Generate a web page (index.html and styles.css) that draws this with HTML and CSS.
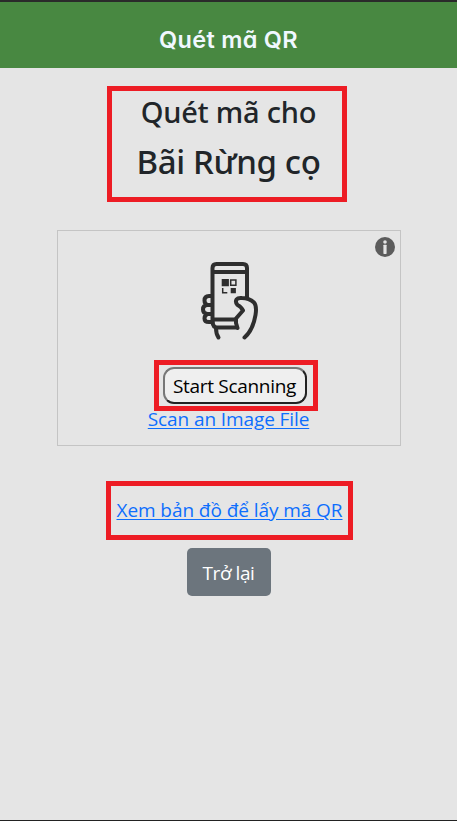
FILE: index.html
```html
<!DOCTYPE html>
<html lang="vi">
<head>
<meta charset="utf-8">
<title>Quét mã QR</title>
<link rel="stylesheet" href="styles.css">
</head>
<body>
<header class="topbar"><h1>Quét mã QR</h1></header>
<main>
  <section class="mark place">
    <h3>Quét mã cho</h3>
    <h2>Bãi Rừng cọ</h2>
  </section>
  <section class="scanner">
    <svg class="info" viewBox="0 0 20 20"><circle cx="10" cy="10" r="10" fill="#5c5c5c"/><circle cx="10" cy="5" r="1.8" fill="#e5e5e5"/><rect x="8.4" y="7.7" width="3.2" height="9.2" rx=".6" fill="#e5e5e5"/></svg>
    <svg class="phone" viewBox="0 0 80 90" fill="none" stroke="#2e2e2e" stroke-width="4" stroke-linecap="round" stroke-linejoin="round">
      <path d="M22.500 68V13Q22.500 9 26.500 9H53Q57 9 57 13V43M22.500 17H57"/>
      <path d="M23 64.500H44M22.500 67Q23 72.500 27 72.500H46"/>
      <path d="M22 41H19Q14.500 41 14.500 45.500Q14.500 49 17.500 50Q13 50 13 54.500Q13 58.500 17.500 59Q14.500 60 14.500 63.500Q14.500 67 19 67H22M17.500 50H22M17.500 59H22"/>
      <path d="M26 73Q26 79 28.500 82.500"/>
      <path d="M47.500 73L46 68V63.500L53 55.500Q51 51.500 47.500 50Q45 47 46.500 44.500Q48 42.500 52 43Q59 43 64 47.500Q67 51 65.500 60Q63 75 54.500 82.500"/>
      <path fill="#2e2e2e" stroke="none" d="M31.700 24h7.200v7.200h-7.200zM40.700 33h5.200v5.200h-5.200z"/>
      <path stroke-width="1.500" stroke-linejoin="miter" stroke-linecap="butt" d="M40.700 25h5.200v5.200h-5.200zM32.700 33v4.700h4.600"/>
    </svg>
    <div class="mark action"><button class="start">Start Scanning</button></div>
    <a class="file">Scan an Image File</a>
  </section>
  <section class="mark map"><a>Xem bản đồ để lấy mã QR</a></section>
  <button class="back">Trở lại</button>
</main>
</body>
</html>
```
FILE: styles.css
```css
* { box-sizing: border-box; }
body {
  margin: 0;
  height: 821px;
  background: #e5e5e5;
  border-bottom: 1px solid #222;
  color: #212529;
  font-family: "Open Sans", "Noto Sans", sans-serif;
  overflow: hidden;
}
.topbar {
  height: 68px;
  border-top: 2px solid #2a2a2a;
  background: #488841;
  display: flex;
  justify-content: center;
}
h1 {
  margin: 23px 0 0;
  font: 600 23.5px/30px Inter, sans-serif;
  font-feature-settings: "cv11";
  letter-spacing: .3px;
  color: #f0f8ff;
  white-space: nowrap;
}
main { display: flex; flex-direction: column; align-items: center; }
.mark {
  border: 5px solid #ed1c24;
  display: flex;
  align-items: center;
  white-space: nowrap;
}
.place {
  flex-direction: column;
  width: 240px;
  height: 116px;
  margin: 18px 3px 0 0;
  padding-left: 3px;
}
.place h3, .place h2 { margin: 0; font-family: "Noto Sans", sans-serif; font-weight: 500; }
.place h3 { font-size: 29px; line-height: 40px; margin-top: 1px; letter-spacing: -.2px; }
.place h2 { font-size: 33px; line-height: 46px; margin-top: 7px; letter-spacing: -.35px; }
.scanner {
  position: relative;
  width: 344px;
  height: 216px;
  margin-top: 28px;
  border: 1px solid #c4c4c4;
  display: flex;
  flex-direction: column;
  align-items: center;
}
.info { position: absolute; right: 5px; top: 6px; width: 20px; height: 20px; }
.phone { width: 80px; height: 90px; margin: 24px 0 0 2px; }
.action {
  width: 164px;
  height: 51px;
  margin: 15px 0 0 14px;
  justify-content: flex-start;
  padding-left: 4px;
}
.start {
  width: 144px;
  height: 37px;
  padding: 0;
  border: 2px solid;
  border-color: #777 #222 #222 #777;
  border-radius: 11px;
  background: #efefef;
  font: 19px/30px "Open Sans", "Noto Sans", sans-serif;
  letter-spacing: -.3px;
  white-space: nowrap;
  color: #000;
}
a { color: #0d6efd; text-decoration: underline; text-underline-offset: 2px; font-size: 19px; letter-spacing: -.07px; }
.file { line-height: 27px; margin-top: -5px; white-space: nowrap; letter-spacing: -.1px; }
.map { width: 247px; height: 59px; margin: 35px 0 0 2px; justify-content: center; padding-bottom: 2px; }
.back {
  width: 84px;
  height: 48px;
  margin-top: 8px;
  padding: 2px 0 0;
  border: 0;
  border-radius: 5px;
  background: #6c757d;
  color: #fff;
  font: 19px/30px "Open Sans", "Noto Sans", sans-serif;
  letter-spacing: -.45px;
}
```
